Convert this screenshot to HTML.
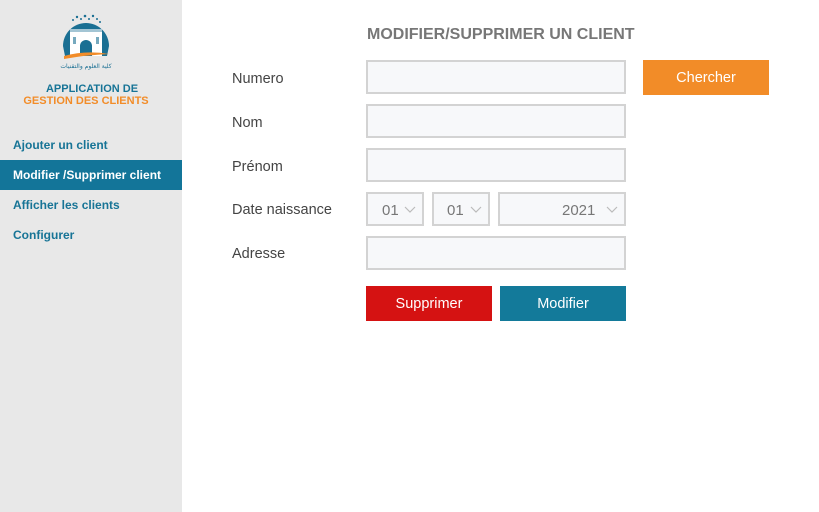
<!DOCTYPE html>
<html><head><meta charset="utf-8"><style>
*{margin:0;padding:0;box-sizing:border-box}
body{width:819px;height:512px;background:#fff;font-family:"Liberation Sans",Arial,sans-serif;position:relative;overflow:hidden}
#side{position:absolute;left:0;top:0;width:182px;height:512px;background:#e8e8e8}
.t1{position:absolute;left:0;width:172px;text-align:center;font-size:11px;font-weight:bold}
.nav{position:absolute;left:0;width:182px;height:30px;line-height:30px;padding-left:13px;font-size:12px;font-weight:bold;color:#177496}
.nav.a{background:#137599;color:#fff}
.lbl{position:absolute;left:232px;font-size:14.5px;color:#444}
.in{position:absolute;left:366px;width:260px;height:34px;border:2px solid #d3d3d3;background:#f7f8fa}
.sel{position:absolute;top:192px;height:34px;border:2px solid #d3d3d3;background:#f7f8fa;font-size:15px;color:#777;line-height:33px}
.sel svg{position:absolute;right:6px;top:12px}
.btn{position:absolute;height:35px;line-height:37px;text-align:center;color:#fff;font-size:14.5px}
</style></head><body>
<div id="side">
<svg style="position:absolute;left:60px;top:12px" width="52" height="60" viewBox="0 0 52 60">
<g fill="#1a6f93"><circle cx="13" cy="8" r="1"/><circle cx="17" cy="5" r="1.2"/><circle cx="21" cy="7" r="1"/><circle cx="25" cy="4" r="1.3"/><circle cx="29" cy="7" r="1"/><circle cx="33" cy="4" r="1.2"/><circle cx="37" cy="7" r="1"/><circle cx="40" cy="10" r="1"/></g>
<path d="M3 34 A23 23 0 0 1 49 34 L47 44 L5 44 Z" fill="#1a6f93"/>
<rect x="10" y="17" width="32" height="27" fill="#fff"/>
<rect x="10" y="17" width="32" height="3" fill="#1a6f93" opacity=".4"/>
<path d="M20 44 V34 a6 6 0 0 1 12 0 V44Z" fill="#1a6f93"/>
<rect x="13" y="25" width="3" height="7" fill="#1a6f93" opacity=".6"/><rect x="36" y="25" width="3" height="7" fill="#1a6f93" opacity=".6"/>
<path d="M4 44 Q26 38 49 42 Q26 43 4 47Z" fill="#f28c28"/>
<text x="26" y="56" font-size="6" fill="#1a6f93" text-anchor="middle" font-family="DejaVu Sans">كلية العلوم والتقنيات</text>
</svg>
<div class="t1" style="top:83px;color:#177496;left:6px">APPLICATION DE</div>
<div class="t1" style="top:95px;color:#f28c28;left:0px">GESTION DES CLIENTS</div>
<div class="nav" style="top:130px">Ajouter un client</div>
<div class="nav a" style="top:160px">Modifier /Supprimer client</div>
<div class="nav" style="top:190px">Afficher les clients</div>
<div class="nav" style="top:220px">Configurer</div>
</div>
<div style="position:absolute;left:367px;top:26px;font-size:16px;font-weight:bold;color:#777">MODIFIER/SUPPRIMER UN CLIENT</div>
<div class="lbl" style="top:71px">Numero</div>
<div class="lbl" style="top:115px">Nom</div>
<div class="lbl" style="top:159px">Prénom</div>
<div class="lbl" style="top:202px">Date naissance</div>
<div class="lbl" style="top:246px">Adresse</div>
<div class="in" style="top:60px"></div>
<div class="in" style="top:104px"></div>
<div class="in" style="top:148px"></div>
<div class="in" style="top:236px"></div>
<div class="sel" style="left:366px;width:58px;padding-left:14px">01<svg width="12" height="8"><path d="M1 1 L6 6 L11 1" fill="none" stroke="#bbb" stroke-width="1.2"/></svg></div>
<div class="sel" style="left:432px;width:58px;padding-left:13px">01<svg width="12" height="8"><path d="M1 1 L6 6 L11 1" fill="none" stroke="#bbb" stroke-width="1.2"/></svg></div>
<div class="sel" style="left:498px;width:128px;padding-left:62px">2021<svg width="12" height="8"><path d="M1 1 L6 6 L11 1" fill="none" stroke="#bbb" stroke-width="1.2"/></svg></div>
<div class="btn" style="left:643px;top:60px;width:126px;background:#f28c28">Chercher</div>
<div class="btn" style="left:366px;top:286px;width:126px;background:#d51212">Supprimer</div>
<div class="btn" style="left:500px;top:286px;width:126px;background:#137a9a">Modifier</div>
</body></html>
